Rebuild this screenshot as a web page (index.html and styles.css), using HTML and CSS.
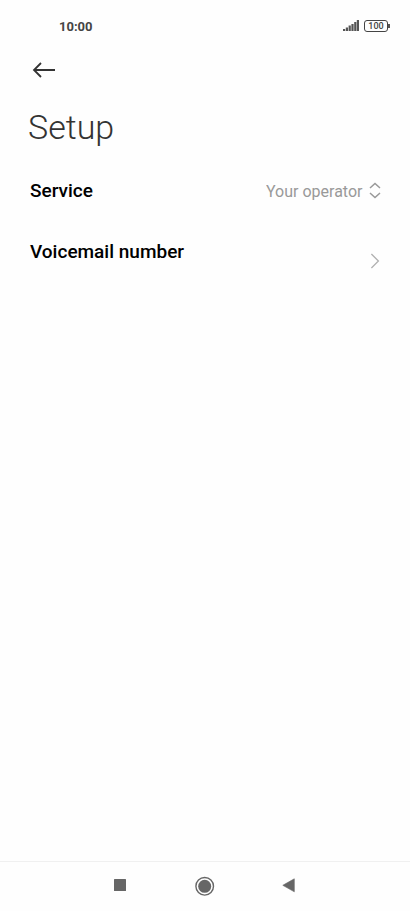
FILE: index.html
```html
<!DOCTYPE html>
<html lang="en">

<head>
  <meta charset="UTF-8" />
  <meta name="viewport" content="width=device-width, initial-scale=1.0" />
  <title>Setup</title>
  <link rel="stylesheet" href="styles.css">
</head>

<body>
  <div class="status">
    <time class="status_time">10:00</time>
    <div class="status_icons">
      <svg width="16" height="12" viewBox="0 0 16 12" fill="#555">
        <rect x="0" y="9" width="2.2" height="2" />
        <rect x="2.8" y="7.5" width="2.2" height="3.5" />
        <rect x="5.6" y="5.5" width="2.2" height="5.5" />
        <rect x="8.4" y="4" width="2.2" height="7" />
        <rect x="11.2" y="2" width="2.2" height="9" />
        <rect x="13.8" y="0" width="2.2" height="11" />
      </svg>
      <div class="battery">
        <span class="battery_level">100</span>
      </div>
    </div>
  </div>

  <header class="header">
    <button type="button" class="header_back" aria-label="Back">
      <svg width="24" height="16" viewBox="0 0 24 16" fill="none" stroke="#333" stroke-width="1.8">
        <path d="M23 8H2M9 1L2 8L9 15" />
      </svg>
    </button>
    <h1 class="header_title">Setup</h1>
  </header>

  <main class="settings">
    <div class="row">
      <label for="service" class="row_label">Service</label>
      <span class="row_value">
        <select id="service" class="row_select">
          <option value="operator" selected>Your operator</option>
        </select>
        <svg width="12" height="18" viewBox="0 0 12 18" fill="none" stroke="#999" stroke-width="1.5">
          <path d="M1 6L6 1.5L11 6M1 11L6 15.5L11 11" />
        </svg>
      </span>
    </div>
    <a href="#voicemail" class="row row-tall">
      <span class="row_label">Voicemail number</span>
      <svg class="row_chevron" width="12" height="16" viewBox="0 0 12 16" fill="none" stroke="#b0b0b0" stroke-width="1.3">
        <path d="M2.4 1L9.4 8L2.4 15" />
      </svg>
    </a>
  </main>

  <nav class="navbar">
    <button type="button" class="navbar_button" aria-label="Recent apps">
      <svg width="20" height="20" viewBox="0 0 20 20" fill="#666">
        <rect x="3" y="3" width="12" height="12" rx="0.5" />
      </svg>
    </button>
    <button type="button" class="navbar_button" aria-label="Home">
      <svg width="20" height="20" viewBox="0 0 20 20">
        <circle cx="9.7" cy="10.3" r="8.8" fill="none" stroke="#666" stroke-width="1.4" />
        <circle cx="9.7" cy="10.3" r="6.5" fill="#666" />
      </svg>
    </button>
    <button type="button" class="navbar_button" aria-label="Back">
      <svg width="20" height="20" viewBox="0 0 20 20" fill="#666">
        <path d="M3.8 9.3L15.3 2.8V15.8Z" stroke="#666" stroke-width="0.6" stroke-linejoin="round" />
      </svg>
    </button>
  </nav>
</body>
</html>
```

FILE: styles.css
```css
html {
  box-sizing: border-box;
}

*,
*::before,
*::after {
  box-sizing: inherit;
}

body {
  display: flex;
  flex-direction: column;
  min-height: 100vh;
  margin: 0;
  font-family: Roboto, "Liberation Sans", sans-serif;
  color: #000;
  background: #fefefe;
}

svg {
  display: block;
}

button {
  padding: 0;
  border: 0;
  background: none;
  cursor: pointer;
}

.status {
  display: flex;
  justify-content: space-between;
  align-items: center;
  height: 52px;
  padding: 0 20px 0 59px;
}

.status_time {
  font-size: 13px;
  font-weight: 700;
  color: #444;
}

.status_icons {
  display: flex;
  align-items: center;
  gap: 5px;
}

.battery {
  display: flex;
  align-items: center;
}

.battery_level {
  width: 24px;
  height: 12px;
  border: 1px solid #444;
  border-radius: 3px;
  font-size: 9px;
  font-weight: 500;
  line-height: 10px;
  text-align: center;
  color: #444;
}

/* battery tip */
.battery::after {
  content: "";
  width: 2px;
  height: 4px;
  background: #555;
}

.header {
  padding: 8px 28px 0;
}

.header_back {
  display: block;
  padding: 2px 4px;
}

.header_title {
  margin: 23px 0 0;
  font-size: 34px;
  font-weight: 300;
  line-height: 48px;
  color: #333;
}

.settings {
  flex: 1;
  padding-top: 10px;
}

.row {
  display: flex;
  justify-content: space-between;
  align-items: center;
  min-height: 60px;
  padding: 0 29px 0 30px;
  color: #000;
  text-decoration: none;
}

.row-tall {
  min-height: 80px;
}

.row-tall .row_label {
  align-self: flex-start;
  padding-top: 19px;
}

.row_label {
  font-size: 19px;
  font-weight: 500;
  line-height: 24px;
}

.row_value {
  display: flex;
  align-items: center;
  gap: 6px;
}

.row_select {
  appearance: none;
  padding: 0;
  border: 0;
  font-family: inherit;
  font-size: 16px;
  color: #999;
  background: none;
}

.navbar {
  display: flex;
  justify-content: center;
  gap: 64px;
  padding: 14px 0 15px;
  border-top: 1px solid #f0f0f0;
}

.navbar_button {
  padding: 0;
}
```
